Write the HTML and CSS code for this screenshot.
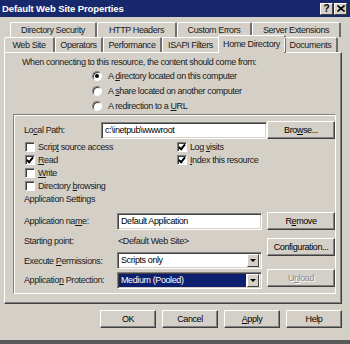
FILE: index.html
```html
<!DOCTYPE html>
<html lang="en">
<head>
    <meta charset="UTF-8">
    <title>Default Web Site Properties</title>
    <link rel="stylesheet" href="styles.css">
</head>
<body>
    <div class="window">
        <div class="titlebar">
            <span class="title">Default Web Site Properties</span>
            <div class="title-btns">
                <span class="title-btn">?</span>
                <span class="title-btn">
                    <svg width="8" height="7" viewBox="0 0 8 7"><path d="M0.5 0.5 L7.5 6.5 M7.5 0.5 L0.5 6.5" stroke="#000" stroke-width="1.6"/></svg>
                </span>
            </div>
        </div>

        <div class="tabs">
            <div class="tab-row back">
                <div class="tab" style="width:87px">Directory Security</div>
                <div class="tab" style="width:80px">HTTP Headers</div>
                <div class="tab" style="width:75px">Custom Errors</div>
                <div class="tab" style="width:89px">Server Extensions</div>
            </div>
            <div class="tab-row front">
                <div class="tab" style="width:51px">Web Site</div>
                <div class="tab" style="width:48px">Operators</div>
                <div class="tab" style="width:59px">Performance</div>
                <div class="tab" style="width:58px">ISAPI Filters</div>
                <div class="tab active" style="width:68px">Home Directory</div>
                <div class="tab" style="width:54px">Documents</div>
            </div>
        </div>

        <div class="panel">
            <div class="intro">When connecting to this resource, the content should come from:</div>
            <div class="radios">
                <div class="radio-row"><span class="radio checked"></span><span>A <u>d</u>irectory located on this computer</span></div>
                <div class="radio-row"><span class="radio"></span><span>A <u>s</u>hare located on another computer</span></div>
                <div class="radio-row"><span class="radio"></span><span>A redirection to a <u>U</u>RL</span></div>
            </div>

            <div class="group">
                <div class="path-row">
                    <span class="label">Lo<u>c</u>al Path:</span>
                    <div class="field">c:\inetpub\wwwroot</div>
                    <div class="btn"><span>Bro<u>w</u>se...</span></div>
                </div>

                <div class="checks">
                    <div class="check-row"><span class="check"></span><span>Scrip<u>t</u> source access</span></div>
                    <div class="check-row"><span class="check on"></span><span>Log <u>v</u>isits</span></div>
                    <div class="check-row"><span class="check on"></span><span><u>R</u>ead</span></div>
                    <div class="check-row"><span class="check on"></span><span><u>I</u>ndex this resource</span></div>
                    <div class="check-row"><span class="check"></span><span><u>W</u>rite</span></div>
                    <div class="check-row"></div>
                    <div class="check-row"><span class="check"></span><span>Directory <u>b</u>rowsing</span></div>
                </div>

                <div class="section-title">Application Settings</div>

                <div class="app-grid">
                    <span class="label">Application na<u>m</u>e:</span>
                    <div class="field">Default Application</div>
                    <div class="btn"><span>R<u>e</u>move</span></div>

                    <span class="label">Starting point:</span>
                    <span class="value">&lt;Default Web Site&gt;</span>
                    <div class="btn config">Configuration...</div>

                    <span class="label">Execute <u>P</u>ermissions:</span>
                    <div class="field select">
                        <span class="sel-text">Scripts only</span>
                        <span class="arrow"></span>
                    </div>

                    <span class="label">Applicatio<u>n</u> Protection:</span>
                    <div class="field select">
                        <span class="sel-text picked">Medium (Pooled)</span>
                        <span class="arrow"></span>
                    </div>
                    <div class="btn disabled unload"><span>U<u>n</u>load</span></div>
                </div>
            </div>
        </div>

        <div class="footer">
            <div class="btn ok">OK</div>
            <div class="btn">Cancel</div>
            <div class="btn"><span><u>A</u>pply</span></div>
            <div class="btn">Help</div>
        </div>
    </div>
</body>
</html>
```

FILE: styles.css
```css
* {
    margin: 0;
    padding: 0;
    box-sizing: border-box;
}

body {
    width: 350px;
    height: 344px;
    overflow: hidden;
    background: #d4d0c8;
    font-family: 'Liberation Sans', Arial, sans-serif;
    font-size: 9px;
    letter-spacing: -0.4px;
    color: #1a1a1a;
}

u {
    text-decoration: underline;
    text-underline-offset: 1px;
}

.window {
    width: 350px;
    height: 344px;
    display: flex;
    flex-direction: column;
    border-bottom: 4px solid #5a5a5a;
}

/* title bar */
.titlebar {
    height: 17px;
    background: #17286c;
    display: flex;
    align-items: center;
    justify-content: space-between;
    padding: 0 3px 0 2px;
}

.title {
    color: #fff;
    font-weight: bold;
    font-size: 9.5px;
    letter-spacing: -0.1px;
}

.title-btns {
    display: flex;
    gap: 1px;
}

.title-btn {
    width: 13px;
    height: 12px;
    background: #d4d0c8;
    border: 1px solid;
    border-color: #fff #404040 #404040 #fff;
    display: flex;
    align-items: center;
    justify-content: center;
    font-weight: bold;
    font-size: 10px;
    letter-spacing: 0;
    color: #000;
}

/* tabs */
.tabs {
    margin-top: 5px;
    display: flex;
    flex-direction: column;
}

.tab-row {
    display: flex;
    height: 15px;
}

.tab-row.back {
    padding-left: 10px;
}

.tab-row.front {
    padding-left: 4px;
    position: relative;
    z-index: 2;
}

.tab {
    height: 15px;
    border-top: 1px solid #fff;
    border-left: 1px solid #fff;
    border-right: 2px solid #6e6e6e;
    border-radius: 2px 2px 0 0;
    display: flex;
    align-items: center;
    justify-content: center;
    white-space: nowrap;
}

.tab.active {
    height: 18px;
    margin-top: -2px;
    background: #d4d0c8;
    margin-left: -2px;
    margin-right: -2px;
    padding-bottom: 2px;
}

/* panel */
.panel {
    margin: 0 8px 0 4px;
    height: 252px;
    border: 1px solid;
    border-color: #fff #404040 #404040 #fff;
    box-shadow: inset -1px -1px #808080;
    padding: 3px 5px 0 8px;
}

.intro {
    line-height: 12px;
    padding-left: 9px;
}

.radios {
    padding-left: 79px;
}

.radio-row {
    height: 15px;
    display: flex;
    align-items: center;
}

.radio {
    width: 10px;
    height: 10px;
    border-radius: 50%;
    background: #fff;
    border: 1px solid;
    border-color: #808080 #fff #fff #808080;
    box-shadow: inset 1px 1px #404040;
    margin-right: 6px;
    display: flex;
    align-items: center;
    justify-content: center;
}

.radio.checked::after {
    content: "";
    width: 4px;
    height: 4px;
    border-radius: 50%;
    background: #000;
}

/* group box */
.group {
    margin-top: 1px;
    height: 180px;
    border: 1px solid;
    border-color: #808080 #fff #fff #808080;
    box-shadow: inset 1px 1px #fff;
    padding: 6px 5px 0 10px;
}

.path-row {
    display: grid;
    grid-template-columns: 72px 161px 68px;
    column-gap: 5px;
    align-items: center;
    height: 18px;
}

.path-row .field {
    margin-right: -5px;
}

.field {
    height: 17px;
    background: #fff;
    border: 1px solid;
    border-color: #808080 #fff #fff #808080;
    box-shadow: inset 1px 1px #404040, inset -1px -1px #d4d0c8;
    display: flex;
    align-items: center;
    padding-left: 3px;
    color: #000;
    white-space: nowrap;
}

.btn {
    height: 18px;
    background: #d4d0c8;
    border: 1px solid;
    border-color: #fff #404040 #404040 #fff;
    box-shadow: inset -1px -1px #808080;
    display: flex;
    align-items: center;
    justify-content: center;
    color: #000;
    white-space: nowrap;
}

.btn.disabled {
    color: #8a8a8a;
    text-shadow: 1px 1px #fff;
}

.checks {
    margin-top: 1px;
    display: grid;
    grid-template-columns: 152px 1fr;
}

.check-row {
    height: 13px;
    display: flex;
    align-items: center;
}

.check {
    width: 10px;
    height: 10px;
    margin: 0 3px 0 1px;
    background: #fff;
    border: 1px solid;
    border-color: #808080 #fff #fff #808080;
    box-shadow: inset 1px 1px #404040;
    position: relative;
}

.check.on::after {
    content: "";
    position: absolute;
    left: 2px;
    top: 0;
    width: 2px;
    height: 5px;
    border: solid #000;
    border-width: 0 2px 2px 0;
    transform: rotate(40deg);
}

.section-title {
    height: 13px;
    line-height: 13px;
    margin-top: 1px;
}

.app-grid {
    margin-top: 6px;
    display: grid;
    grid-template-columns: 88px 145px 68px;
    grid-template-rows: 18px 19px 19px 18px;
    column-gap: 5px;
    row-gap: 1px;
    align-items: center;
}

.label {
    white-space: nowrap;
}

.value {
    padding-left: 1px;
}

.btn.config {
    grid-column: 3;
    grid-row: 2 / span 2;
    align-self: start;
    margin-top: 7px;
}

.select {
    padding: 1px 2px 1px 1px;
    justify-content: space-between;
}

.sel-text {
    flex: 1;
    height: 13px;
    line-height: 13px;
    padding-left: 2px;
}

.sel-text.picked {
    background: #0d2070;
    color: #fff;
    margin-right: 1px;
}

.arrow {
    width: 12px;
    height: 13px;
    background: #d4d0c8;
    border: 1px solid;
    border-color: #fff #404040 #404040 #fff;
    position: relative;
}

.arrow::after {
    content: "";
    position: absolute;
    left: 2px;
    top: 4px;
    border: 3px solid transparent;
    border-top: 3px solid #000;
    border-bottom: 0;
}

.btn.unload {
    grid-column: 3;
    grid-row: 4;
    margin-top: -4px;
}

/* footer buttons */
.footer {
    display: flex;
    justify-content: flex-end;
    gap: 6px;
    padding: 0 8px 0 0;
    margin-top: 6px;
}

.footer .btn {
    width: 56px;
}
```
